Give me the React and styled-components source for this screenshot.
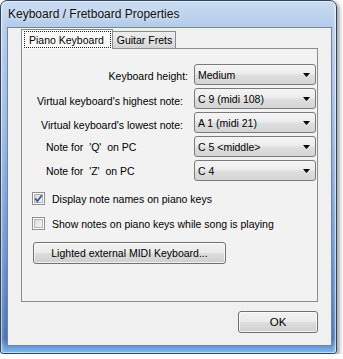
import React from 'react';
import styled, { createGlobalStyle } from 'styled-components';

const Global = createGlobalStyle`
  html, body {
    margin: 0;
    padding: 0;
    background: #ffffff;
  }
  body {
    font-family: "Liberation Sans", Arial, sans-serif;
    font-size: 10.5px;
    color: #000;
  }
`

const Window = styled.div`
  box-sizing: border-box;
  width: 337px;
  height: 354px;
  display: flex;
  flex-direction: column;
  padding: 0 4px 7px 6px;
  border: 1px solid #2f4463;
  border-radius: 7px 7px 3px 3px;
  background:
    linear-gradient(90deg, rgba(255, 255, 255, 0.25) 0px, rgba(255, 255, 255, 0) 5px, rgba(255, 255, 255, 0) calc(100% - 4px), rgba(255, 255, 255, 0.35) 100%),
    linear-gradient(180deg, #c9dbf1 0px, #b4cbea 26px, #99b8e2 35%, #6c93cf 70%, #4670b6 96%, #7fbcee 100%);
  box-shadow: inset 0 0 0 1px rgba(255, 255, 255, 0.5), 2px 2px 5px rgba(0, 0, 0, 0.45);
`

const TitleBar = styled.div`
  height: 27px;
  display: flex;
  align-items: center;
  padding-left: 1px;
`

const Title = styled.span`
  font-family: "Liberation Sans", Arial, sans-serif;
  font-size: 12px;
  color: #111;
  text-shadow: 0 0 6px rgba(255, 255, 255, 0.9);
`

const Client = styled.div`
  flex: 1;
  display: flex;
  flex-direction: column;
  padding: 1px 13px 12px 13px;
  background: #f0f0f0;
  border: 1px solid #6f86a8;
`

const TabStrip = styled.div`
  display: flex;
  align-items: flex-end;
  height: 19px;
`

const Tab = styled.div`
  box-sizing: border-box;
  display: flex;
  align-items: center;
  position: relative;
  border: 1px solid #898c95;
  border-bottom: none;
  ${props => props.$active ? `
    height: 20px;
    margin-bottom: -1px;
    padding: 1px 1px 1px 2px;
    background: #fcfcfc;
    z-index: 1;
  ` : `
    height: 17px;
    padding: 0 3px 0 4px;
    margin-left: -1px;
    background: linear-gradient(180deg, #efefef 0%, #e2e2e2 50%, #d3d3d3 100%);
  `}
`

const FocusRing = styled.span`
  box-sizing: border-box;
  display: flex;
  align-items: center;
  height: 100%;
  padding: 0 6px 0 4px;
  border: 1px dotted #222;
`

const Pane = styled.div`
  box-sizing: border-box;
  height: 254px;
  display: flex;
  flex-direction: column;
  padding: 15px 0 0 0;
  border: 1px solid #898c95;
  background: #f2f2f2;
`

const Form = styled.div`
  display: grid;
  grid-template-columns: 172px 122px;
  grid-auto-rows: 21px;
  row-gap: 3px;
`

const Label = styled.div`
  display: flex;
  align-items: center;
  white-space: pre;
  justify-content: ${props => props.$left ? 'flex-start' : 'flex-end'};
  padding-left: ${props => props.$left ? '24px' : '0'};
  padding-right: ${props => props.$left ? '0' : `${props.$gap}px`};
  padding-top: ${props => props.$shift || 0}px;
`

const Select = styled.div`
  box-sizing: border-box;
  display: flex;
  align-items: center;
  justify-content: space-between;
  padding: 0 5px 0 3px;
  border: 1px solid #7a7a7a;
  border-radius: 3px;
  background: linear-gradient(180deg, #f4f4f4 0%, #ececec 48%, #dfdfdf 52%, #d4d4d4 100%);
  white-space: nowrap;
`

const Arrow = () => (
  <svg width="7" height="4" viewBox="0 0 7 4">
    <polygon points="0,0 7,0 3.5,4" fill="#000" />
  </svg>
)

const Checks = styled.div`
  display: flex;
  flex-direction: column;
  gap: 12px;
  margin: 11px 0 0 10px;
`

const CheckRow = styled.label`
  display: flex;
  align-items: center;
  gap: 7px;
  height: 13px;
  white-space: nowrap;
`

const Box = ({ checked }) => (
  <svg width="13" height="13" viewBox="0 0 13 13">
    <defs>
      <linearGradient id="cbfill" x1="0" y1="0" x2="1" y2="1">
        <stop offset="0" stopColor="#d9d9d9" />
        <stop offset="1" stopColor="#f7f7f7" />
      </linearGradient>
    </defs>
    <rect x="0.5" y="0.5" width="12" height="12" fill="#fff" stroke="#8e8f8f" />
    <rect x="2.5" y="2.5" width="8" height="8" fill="url(#cbfill)" stroke="#b4b4b4" />
    {checked && (
      <path d="M3.2 6.4 L5.4 9.2 L9.8 3.2" fill="none" stroke="#3d5a9e" strokeWidth="1.8" />
    )}
  </svg>
)

const PushButton = styled.button`
  box-sizing: border-box;
  height: 22px;
  width: ${props => props.$width}px;
  padding: 0;
  font-family: "Liberation Sans", Arial, sans-serif;
  font-size: ${props => props.$size || 10.5}px;
  color: #000;
  border: 1px solid #707070;
  border-radius: 3px;
  background: linear-gradient(180deg, #f2f2f2 0%, #ebebeb 48%, #dddddd 52%, #cfcfcf 100%);
  box-shadow: inset 0 0 0 1px rgba(255, 255, 255, 0.7);
`

const WideButton = styled(PushButton)`
  margin: 12px 0 0 11px;
`

const Footer = styled.div`
  display: flex;
  justify-content: flex-end;
  margin-top: 9px;
`

const rows = [
  { label: 'Keyboard height:', value: 'Medium', gap: 6, shift: 2 },
  { label: "Virtual keyboard's highest note:", value: 'C 9 (midi 108)', gap: 11, shift: 4 },
  { label: "Virtual keyboard's lowest note:", value: 'A 1 (midi 21)', gap: 11, shift: 4 },
  { label: "Note for  'Q'  on PC", value: 'C 5 <middle>', left: true },
  { label: "Note for  'Z'  on PC", value: 'C 4', left: true },
]

export default function App() {
  return (
    <>
      <Global />
      <Window>
        <TitleBar>
          <Title>Keyboard / Fretboard Properties</Title>
        </TitleBar>
        <Client>
          <TabStrip>
            <Tab $active>
              <FocusRing>Piano Keyboard</FocusRing>
            </Tab>
            <Tab>Guitar Frets</Tab>
          </TabStrip>
          <Pane>
            <Form>
              {rows.map(r => (
                <React.Fragment key={r.value}>
                  <Label $left={r.left} $gap={r.gap} $shift={r.shift}>
                    {r.label}
                  </Label>
                  <Select>
                    <span>{r.value}</span>
                    <Arrow />
                  </Select>
                </React.Fragment>
              ))}
            </Form>
            <Checks>
              <CheckRow>
                <Box checked />
                Display note names on piano keys
              </CheckRow>
              <CheckRow>
                <Box />
                Show notes on piano keys while song is playing
              </CheckRow>
            </Checks>
            <WideButton $width={193}>Lighted external MIDI Keyboard...</WideButton>
          </Pane>
          <Footer>
            <PushButton $width={80} $size={11.5}>OK</PushButton>
          </Footer>
        </Client>
      </Window>
    </>
  );
}
